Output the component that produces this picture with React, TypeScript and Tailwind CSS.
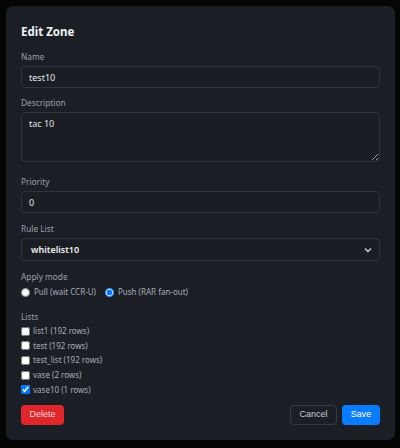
import React from "react";

const labelCls = "block text-[8.3px] leading-[12px] text-[#9aa0a9] mb-[3px]";
const fieldCls =
  "block w-full rounded-[4px] border border-[#2f333b] bg-[#1a1d23] text-[9px] text-[#e4e6ea] outline-none";

const lists = [
  { name: "list1 (192 rows)", checked: false },
  { name: "test (192 rows)", checked: false },
  { name: "test_list (192 rows)", checked: false },
  { name: "vase (2 rows)", checked: false },
  { name: "vase10 (1 rows)", checked: true },
];

export default function App() {
  return (
    <div
      className="w-[400px] h-[448px] bg-[#050505] pt-[6px] pl-[6px]"
      style={{ fontFamily: '"Noto Sans", "Open Sans", sans-serif' }}
    >
      <div className="w-[389px] h-[434px] rounded-[7px] bg-[#1b1e25] px-[15px] pt-[16px]">
        <h2 className="text-[11.5px] leading-[20px] font-bold text-[#f1f2f4] mb-[9px]">Edit Zone</h2>

        <div className="mb-[9px]">
          <label className={labelCls}>Name</label>
          <input className={`${fieldCls} h-[22px] px-[7px]`} defaultValue="test10" readOnly />
        </div>

        <div className="mb-[14px]">
          <label className={labelCls}>Description</label>
          <textarea
            className={`${fieldCls} h-[50px] px-[7px] py-[4px] leading-[14px] resize-y`}
            defaultValue="tac 10"
            readOnly
          />
        </div>

        <div className="mb-[10px]">
          <label className={labelCls}>Priority</label>
          <input className={`${fieldCls} h-[22px] px-[7px]`} defaultValue="0" readOnly />
        </div>

        <div className="mb-[10px]">
          <label className={labelCls}>Rule List</label>
          <div className={`${fieldCls} h-[23px] px-[9px] flex items-center justify-between`}>
            <span className="font-semibold text-[#f0f1f3]">whitelist10</span>
            <svg width="8" height="6" viewBox="0 0 8 6" className="mr-[-2px]">
              <path d="M1 1.5 L4 4.5 L7 1.5" fill="none" stroke="#d6d8dc" strokeWidth="1.4" />
            </svg>
          </div>
        </div>

        <div>
          <div className={labelCls}>Apply mode</div>
          <div className="flex items-center h-[12px] text-[8px] text-[#a9aeb6]">
            <label className="flex items-center gap-[4px] mr-[9px]">
              <input type="radio" name="mode" className="m-0 w-[9px] h-[9px]" readOnly />
              Pull (wait CCR-U)
            </label>
            <label className="flex items-center gap-[4px]">
              <input type="radio" name="mode" className="m-0 w-[9px] h-[9px]" defaultChecked />
              Push (RAR fan-out)
            </label>
          </div>
        </div>

        <div className="mt-[13px]">
          <div className="block text-[8.3px] leading-[12px] text-[#9aa0a9] mb-[1px]">Lists</div>
          <div className="flex flex-col">
            {lists.map((l) => (
              <label
                key={l.name}
                className="flex items-center gap-[3px] h-[14.6px] text-[8px] text-[#a9aeb6]"
              >
                <input type="checkbox" className="m-0 w-[9px] h-[9px]" defaultChecked={l.checked} />
                {l.name}
              </label>
            ))}
          </div>
        </div>

        <div
          className="flex items-center justify-between mt-[8px]"
          style={{ fontFamily: '"Liberation Sans", Arial, sans-serif' }}
        >
          <button className="h-[20px] w-[43px] rounded-[4px] bg-[#e0262a] text-[9px] text-[#f3d7d8]">
            Delete
          </button>
          <div className="flex gap-[5px]">
            <button className="h-[20px] w-[47px] rounded-[4px] border border-[#363a42] text-[9px] text-[#c9ccd1]">
              Cancel
            </button>
            <button className="h-[20px] w-[38px] rounded-[4px] bg-[#0a7cff] text-[9px] text-white">
              Save
            </button>
          </div>
        </div>
      </div>
    </div>
  );
}
